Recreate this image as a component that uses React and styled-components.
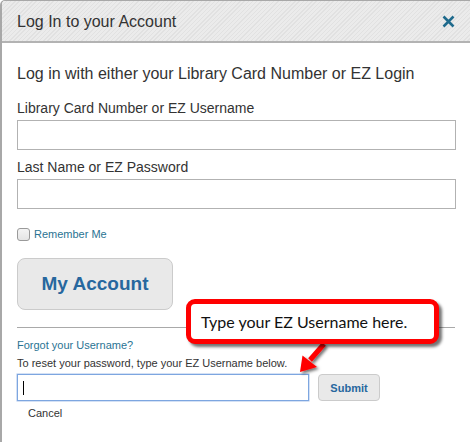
import React from "react";
import styled, { createGlobalStyle } from "styled-components";

const Global = createGlobalStyle`
  html, body { margin: 0; padding: 0; background: #fff; }
  body { font-family: "Liberation Sans", Arial, sans-serif; color: #333; }
  * { box-sizing: border-box; }
`;

const Dialog = styled.div`
  position: relative;
  width: 470px;
  height: 442px;
  border-left: 2px solid #a8a8a8;
  border-top: 1px solid #a8a8a8;
  border-top-left-radius: 5px;
  overflow: hidden;
  background: #fff;
`;

const Header = styled.div`
  height: 42px;
  display: flex;
  align-items: center;
  justify-content: space-between;
  padding: 1px 15px 0 15px;
  border-bottom: 2px solid #b3b3b3;
  background: repeating-linear-gradient(
    135deg,
    #e1e1e1 0px,
    #e1e1e1 1px,
    #ebebeb 1px,
    #ebebeb 3px
  );
`;

const Title = styled.h1`
  margin: 0;
  font-size: 16px;
  font-weight: normal;
  color: #333;
`;

const Close = styled.button`
  border: 0;
  background: none;
  padding: 0;
  width: 14px;
  height: 14px;
  display: flex;
  align-items: center;
  justify-content: center;
  cursor: pointer;
`;

const Body = styled.div`
  padding: 0 14px 0 15px;
  display: flex;
  flex-direction: column;
`;

const Lead = styled.p`
  margin: 22px 0 0;
  font-size: 16px;
  line-height: 18px;
  color: #333;
`;

const Label = styled.label`
  display: block;
  margin-top: ${(p) => p.$mt}px;
  font-size: 14px;
  line-height: 16px;
  color: #333;
`;

const TextInput = styled.input`
  display: block;
  width: 100%;
  height: 30px;
  margin-top: 4px;
  border: 1px solid #b2b2b2;
  padding: 0 6px;
  font: inherit;
  outline: none;
`;

const CheckRow = styled.div`
  display: flex;
  align-items: center;
  gap: 4px;
  margin-top: 19px;
  height: 13px;
`;

const Check = styled.span`
  width: 13px;
  height: 13px;
  border: 1px solid #9a9a9a;
  border-radius: 3px;
  background: linear-gradient(#f4f4f4, #e4e4e4);
`;

const LinkText = styled.a`
  font-size: 11px;
  line-height: 13px;
  color: #2a7393;
  text-decoration: none;
`;

const BigButton = styled.button`
  margin-top: 17px;
  width: 156px;
  height: 52px;
  border: 1px solid #cbcbcb;
  border-radius: 8px;
  background: #e9e9e9;
  color: #27679e;
  font-family: "Liberation Sans", Arial, sans-serif;
  font-weight: bold;
  font-size: 19px;
  padding: 0;
`;

const Rule = styled.hr`
  margin: 17px 1px 0 0;
  border: 0;
  border-top: 1px solid #a9a9a9;
  height: 0;
`;

const Forgot = styled(LinkText)`
  margin-top: 11px;
  display: block;
`;

const Hint = styled.p`
  margin: 5px 0 0;
  font-size: 11px;
  line-height: 13px;
  color: #333;
`;

const ResetRow = styled.div`
  display: flex;
  align-items: flex-start;
  gap: 9px;
  margin-top: 4px;
`;

const CaretField = styled.div`
  position: relative;
  width: 292px;
  height: 27px;
  margin-top: 0;
  border: 1px solid #7da6e0;
  box-shadow: 0 0 0 0.5px #a9c4ec;
  &::before {
    content: "";
    position: absolute;
    left: 5px;
    top: 6px;
    width: 1px;
    height: 14px;
    background: #000;
  }
`;

const BareInput = styled.input`
  width: 100%;
  height: 100%;
  border: 0;
  outline: none;
  background: transparent;
  padding: 0 6px;
`;

const SmallButton = styled.button`
  width: 62px;
  height: 27px;
  border: 1px solid #cbcbcb;
  border-radius: 4px;
  background: #e9e9e9;
  color: #27679e;
  font-family: "Liberation Sans", Arial, sans-serif;
  font-weight: bold;
  font-size: 11px;
  padding: 0;
`;

const Cancel = styled.span`
  margin: 6px 0 0 11px;
  font-size: 11px;
  line-height: 13px;
  color: #333;
`;

const Callout = styled.div`
  position: absolute;
  left: 184px;
  top: 298px;
  width: 253px;
  height: 45px;
  border: 5px solid #ff0000;
  border-radius: 9px;
  background: #fff;
  box-shadow: 3px 3px 3px rgba(0, 0, 0, 0.55);
  display: flex;
  align-items: center;
  padding-left: 10px;
  font-family: Lato, "Open Sans", sans-serif;
  font-size: 16px;
  color: #111;
  white-space: nowrap;
`;

const ArrowLayer = styled.svg`
  position: absolute;
  left: 0;
  top: 0;
  width: 470px;
  height: 442px;
  pointer-events: none;
  overflow: visible;
`;

export default function App() {
  return (
    <>
      <Global />
      <Dialog>
        <Header>
          <Title>Log In to your Account</Title>
          <Close aria-label="Close">
            <svg width="13" height="13" viewBox="0 0 13 13">
              <path d="M1.5 1.5 L11.5 11.5 M11.5 1.5 L1.5 11.5" stroke="#1f6a8c" strokeWidth="2.6" strokeLinecap="butt" />
            </svg>
          </Close>
        </Header>
        <Body>
          <Lead>Log in with either your Library Card Number or EZ Login</Lead>
          <Label $mt={17}>Library Card Number or EZ Username</Label>
          <TextInput type="text" />
          <Label $mt={9}>Last Name or EZ Password</Label>
          <TextInput type="password" />
          <CheckRow>
            <Check />
            <LinkText>Remember Me</LinkText>
          </CheckRow>
          <BigButton>My Account</BigButton>
          <Rule />
          <Forgot>Forgot your Username?</Forgot>
          <Hint>To reset your password, type your EZ Username below.</Hint>
          <ResetRow>
            <CaretField>
              <BareInput type="text" />
            </CaretField>
            <SmallButton>Submit</SmallButton>
          </ResetRow>
          <Cancel>Cancel</Cancel>
        </Body>
        <ArrowLayer viewBox="0 0 470 442">
          <defs>
            <filter id="sh" x="-50%" y="-50%" width="200%" height="200%">
              <feDropShadow dx="2" dy="2" stdDeviation="1.5" floodColor="#000" floodOpacity="0.55" />
            </filter>
          </defs>
          <g filter="url(#sh)">
            <path d="M322 343 L308 359" stroke="#ff0000" strokeWidth="5" fill="none" />
            <polygon points="298,371 300.5,354.5 315,366" fill="#ff0000" />
          </g>
        </ArrowLayer>
        <Callout>Type your EZ Username here.</Callout>
      </Dialog>
    </>
  );
}
